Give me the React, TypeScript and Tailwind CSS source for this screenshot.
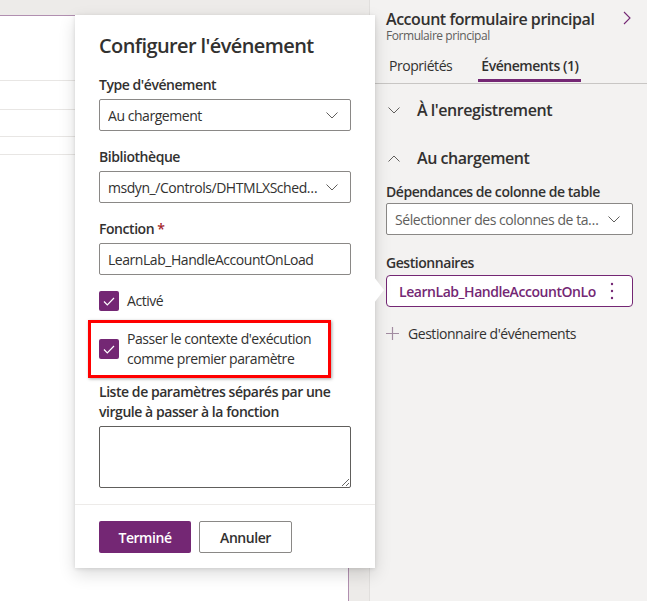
import React from "react";

const F = { fontFamily: '"Segoe UI", "Open Sans", "Noto Sans", sans-serif', letterSpacing: "-0.45px" };

function ChevronDown({ className = "" }: { className?: string }) {
  return (
    <svg width="12" height="7" viewBox="0 0 12 7" className={className}>
      <path d="M0.5 0.5 L6 6 L11.5 0.5" fill="none" stroke="#605e5c" strokeWidth="1" />
    </svg>
  );
}

function Check() {
  return (
    <div className="w-5 h-5 rounded-[2px] bg-[#742774] flex items-center justify-center shrink-0">
      <svg width="12" height="9" viewBox="0 0 12 9">
        <path d="M1 4.5 L4.3 7.8 L11 1" fill="none" stroke="#fff" strokeWidth="1.2" />
      </svg>
    </div>
  );
}

function Select({ text, mt }: { text: string; mt: string }) {
  return (
    <div className={`${mt} h-8 border border-[#8a8886] rounded-[2px] flex items-center pl-2 pr-3 bg-white`}>
      <span className="flex-1 min-w-0 text-[14px] text-[#323130] truncate">{text}</span>
      <ChevronDown className="ml-2 shrink-0" />
    </div>
  );
}

export default function App() {
  return (
    <div className="relative w-[647px] h-[601px] overflow-hidden flex bg-[#f3f2f1]" style={F}>
      {/* left canvas area */}
      <div className="w-[370px] shrink-0 h-full flex flex-col bg-[#edebe9] border-r border-[#e1dfdd]">
        <div className="h-[15px] shrink-0" />
        <div className="flex-1 flex">
          <div className="w-[349px] h-full bg-white border-t border-r border-[#b18fb0] flex flex-col">
            <div className="h-[64px]" />
            <div className="h-[29px] border-t border-[#e8e6e4]" />
            <div className="h-[27px] border-t border-[#e8e6e4]" />
            <div className="h-[18px] border-t border-[#e8e6e4]" />
            <div className="border-t border-[#e8e6e4]" />
          </div>
        </div>
      </div>

      {/* right panel */}
      <div className="flex-1 min-w-0 flex flex-col pl-4 pr-[14px]">
        <div className="flex items-start mt-[8px]">
          <div className="flex-1 min-w-0">
            <div className="text-[16px] leading-[22px] font-semibold text-[#323130] whitespace-nowrap">Account formulaire principal</div>
            <div className="text-[12px] leading-[14px] text-[#605e5c] -mt-[1px]">Formulaire principal</div>
          </div>
          <svg width="8" height="14" viewBox="0 0 8 14" className="mt-[3px] mr-[2px] shrink-0">
            <path d="M1 1 L7 7 L1 13" fill="none" stroke="#742774" strokeWidth="1.1" />
          </svg>
        </div>
        <div className="-ml-4 -mr-[14px] mt-[5px] border-b border-[#c8c6c4] flex pl-[19px] h-[36px]">
          <div className="text-[14px] text-[#323130] pt-[7px] mr-[29px]">Propriétés</div>
          <div className="relative text-[14px] font-semibold text-[#323130] pt-[7px]">
            Événements (1)
            <div className="absolute left-[-3px] right-[-3px] bottom-[1px] h-[3px] bg-[#742774]" />
          </div>
        </div>
        <div className="flex items-center h-[22px] mt-[15px]">
          <ChevronDown className="ml-[2px] w-[12px]" />
          <span className="ml-[17px] text-[16px] font-semibold text-[#323130]">À l'enregistrement</span>
        </div>
        <div className="flex items-center h-[22px] mt-[26px]">
          <svg width="12" height="7" viewBox="0 0 12 7" className="ml-[2px]">
            <path d="M0.5 6.5 L6 1 L11.5 6.5" fill="none" stroke="#605e5c" strokeWidth="1" />
          </svg>
          <span className="ml-[17px] text-[16px] font-semibold text-[#323130]">Au chargement</span>
        </div>
        <div className="mt-[13px] text-[14px] leading-[20px] font-semibold text-[#323130] whitespace-nowrap">Dépendances de colonne de table</div>
        <div className="mt-[1px] h-8 border border-[#8a8886] rounded-[2px] flex items-center pl-2 pr-3 bg-white">
          <span className="flex-1 min-w-0 text-[14px] text-[#605e5c] truncate">Sélectionner des colonnes de table</span>
          <ChevronDown className="ml-2 shrink-0" />
        </div>
        <div className="mt-[18px] text-[14px] leading-[20px] font-semibold text-[#323130]">Gestionnaires</div>
        <div className="mt-[2px] h-[32px] border border-[#742774] rounded-[4px] bg-white flex items-center pl-[12px] pr-[18px]">
          <span className="flex-1 min-w-0 overflow-hidden whitespace-nowrap text-[14px] font-semibold text-[#742774]">LearnLab_HandleAccountOnLoad</span>
          <svg width="4" height="18" viewBox="0 0 4 18" className="ml-[14px] shrink-0">
            <circle cx="2" cy="2" r="1.2" fill="#742774" />
            <circle cx="2" cy="9" r="1.2" fill="#742774" />
            <circle cx="2" cy="16" r="1.2" fill="#742774" />
          </svg>
        </div>
        <div className="mt-[16px] flex items-center">
          <svg width="13" height="13" viewBox="0 0 13 13" className="shrink-0">
            <path d="M6.5 0 V13 M0 6.5 H13" stroke="#a28ca1" strokeWidth="1.2" />
          </svg>
          <span className="ml-[9px] text-[14px] text-[#323130] whitespace-nowrap">Gestionnaire d'événements</span>
        </div>
      </div>

      {/* callout dialog */}
      <div className="absolute left-[75px] top-[15px] w-[300px] h-[553px] bg-white shadow-[0_6px_16px_rgba(0,0,0,0.14),0_1px_4px_rgba(0,0,0,0.11)]">
        <div className="absolute right-[-9px] top-[262px] w-0 h-0 border-y-[13px] border-y-transparent border-l-[10px] border-l-white" />
        <div className="flex flex-col h-full">
          <div className="px-6 pt-[17px]">
            <div className="text-[20px] leading-[28px] font-semibold text-[#323130] tracking-[-0.6px]">Configurer l'événement</div>
            <div className="mt-[15px] text-[14px] leading-[20px] font-semibold text-[#323130]">Type d'événement</div>
            <Select text="Au chargement" mt="mt-[4px]" />
            <div className="mt-[16px] text-[14px] leading-[20px] font-semibold text-[#323130]">Bibliothèque</div>
            <Select text="msdyn_/Controls/DHTMLXScheduler/scheduler.js" mt="mt-[4px]" />
            <div className="mt-[16px] text-[14px] leading-[20px] font-semibold text-[#323130]">
              Fonction <span className="text-[#a4262c]">*</span>
            </div>
            <div className="mt-[4px] h-8 border border-[#8a8886] rounded-[2px] flex items-center px-2">
              <span className="text-[14px] text-[#323130]">LearnLab_HandleAccountOnLoad</span>
            </div>
            <div className="mt-[16px] flex items-center">
              <Check />
              <span className="ml-[8px] text-[14px] leading-[20px] text-[#323130]">Activé</span>
            </div>
            <div className="mt-[9px] -ml-[11px] w-[243px] h-[58px] border-[3px] border-[#ff0000] shadow-[1px_1px_3px_rgba(0,0,0,0.35)] flex items-center pl-[8px]">
              <Check />
              <div className="ml-[8px] text-[14px] leading-[20px] text-[#323130]">
                Passer le contexte d'exécution
                <br />
                comme premier paramètre
              </div>
            </div>
            <div className="mt-[4px] text-[14px] leading-[20px] font-semibold text-[#323130]">
              Liste de paramètres séparés par une
              <br />
              virgule à passer à la fonction
            </div>
            <textarea
              className="mt-[4px] block w-full h-[62px] border border-[#605e5c] rounded-[2px] outline-none"
              defaultValue=""
            />
          </div>
          <div className="mt-[16px] border-t border-[#edebe9]" />
          <div className="px-6 pt-[16px] flex gap-2">
            <div className="w-[92px] h-8 rounded-[2px] bg-[#742774] flex items-center justify-center text-[14px] font-semibold text-white">Terminé</div>
            <div className="w-[93px] h-8 rounded-[2px] border border-[#8a8886] flex items-center justify-center text-[14px] font-semibold text-[#323130]">Annuler</div>
          </div>
        </div>
      </div>
    </div>
  );
}
